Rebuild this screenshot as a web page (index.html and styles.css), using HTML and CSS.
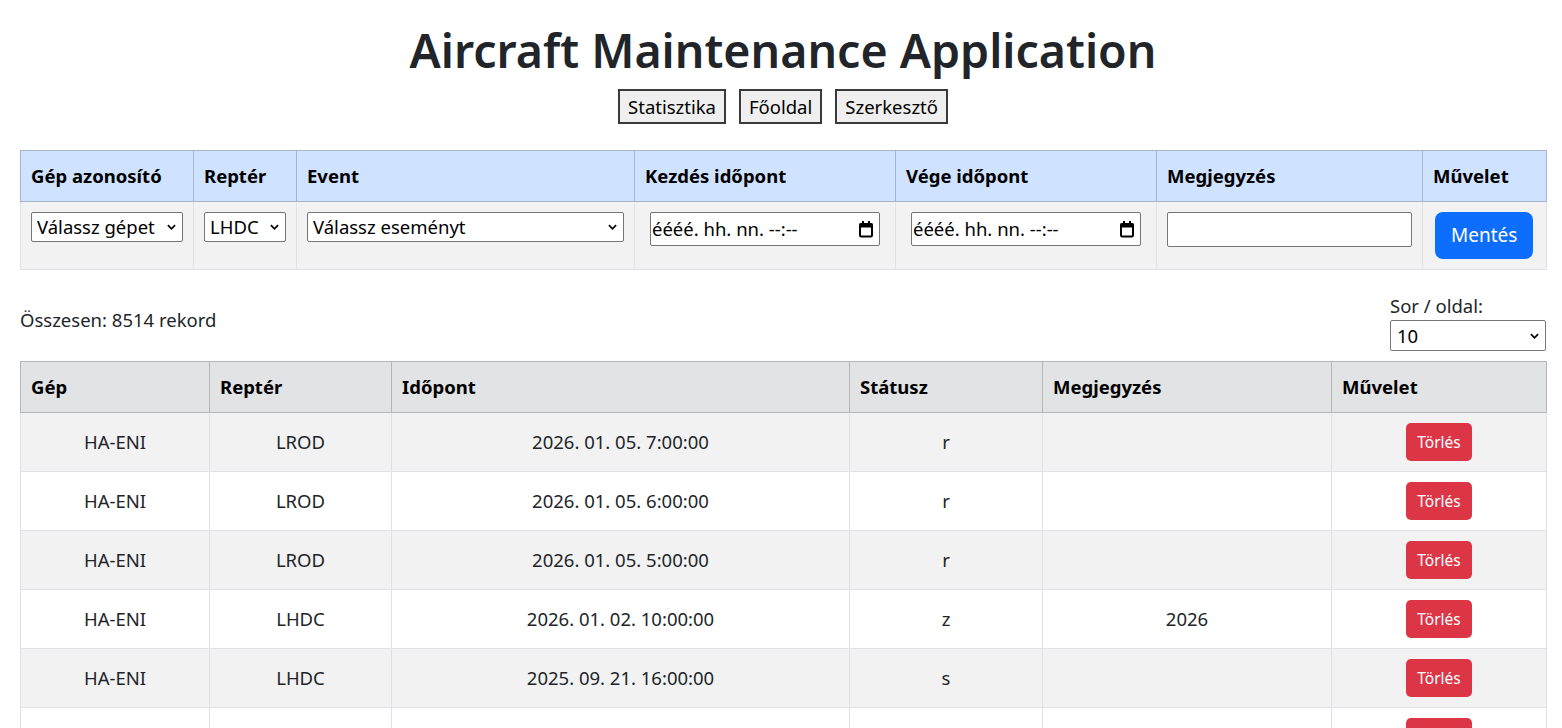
FILE: index.html
```html
<!DOCTYPE html>
<html lang="hu">
<head>
<meta charset="utf-8">
<title>Aircraft Maintenance Application</title>
<link rel="stylesheet" href="styles.css">
</head>
<body>
<div class="page">
  <h1 class="title">Aircraft Maintenance Application</h1>
  <nav class="nav">
    <button class="nav-btn">Statisztika</button>
    <button class="nav-btn">Főoldal</button>
    <button class="nav-btn">Szerkesztő</button>
  </nav>

  <table class="grid form-table">
    <colgroup>
      <col class="c173"><col class="c103"><col class="c338"><col class="c261"><col class="c261"><col class="c266"><col class="c124">
    </colgroup>
    <thead>
      <tr>
        <th>Gép azonosító</th>
        <th>Reptér</th>
        <th>Event</th>
        <th>Kezdés időpont</th>
        <th>Vége időpont</th>
        <th>Megjegyzés</th>
        <th>Művelet</th>
      </tr>
    </thead>
    <tbody>
      <tr>
        <td>
          <span class="select w-plane">
            <select><option>Válassz gépet</option></select>
            <svg class="chev" viewBox="0 0 10 6"><path d="M1 1l4 4 4-4" fill="none" stroke="#000" stroke-width="1.9"/></svg>
          </span>
        </td>
        <td>
          <span class="select w-airport">
            <select><option>LHDC</option></select>
            <svg class="chev" viewBox="0 0 10 6"><path d="M1 1l4 4 4-4" fill="none" stroke="#000" stroke-width="1.9"/></svg>
          </span>
        </td>
        <td>
          <span class="select w-event">
            <select><option>Válassz eseményt</option></select>
            <svg class="chev" viewBox="0 0 10 6"><path d="M1 1l4 4 4-4" fill="none" stroke="#000" stroke-width="1.9"/></svg>
          </span>
        </td>
        <td>
          <div class="dt">
            <span>éééé. hh. nn. --:--</span>
            <svg class="cal" viewBox="0 0 16 18"><rect x="2" y="4" width="12" height="12.5" rx="1.2" fill="none" stroke="#000" stroke-width="2"/><rect x="1.5" y="3.5" width="13" height="4" fill="#000"/><rect x="4" y="1" width="2" height="3" fill="#000"/><rect x="10" y="1" width="2" height="3" fill="#000"/></svg>
          </div>
        </td>
        <td>
          <div class="dt">
            <span>éééé. hh. nn. --:--</span>
            <svg class="cal" viewBox="0 0 16 18"><rect x="2" y="4" width="12" height="12.5" rx="1.2" fill="none" stroke="#000" stroke-width="2"/><rect x="1.5" y="3.5" width="13" height="4" fill="#000"/><rect x="4" y="1" width="2" height="3" fill="#000"/><rect x="10" y="1" width="2" height="3" fill="#000"/></svg>
          </div>
        </td>
        <td><input class="text-input" type="text"></td>
        <td><button class="btn-save">Mentés</button></td>
      </tr>
    </tbody>
  </table>

  <div class="count-row">
    <div class="count">Összesen: 8514 rekord</div>
    <div class="per-page">
      <label class="per-label">Sor / oldal:</label>
      <span class="select w-page">
        <select><option>10</option></select>
        <svg class="chev" viewBox="0 0 10 6"><path d="M1 1l4 4 4-4" fill="none" stroke="#000" stroke-width="1.9"/></svg>
      </span>
    </div>
  </div>

  <table class="grid data-table">
    <colgroup>
      <col class="c189"><col class="c182"><col class="c458"><col class="c193"><col class="c289"><col class="c215">
    </colgroup>
    <thead>
      <tr>
        <th>Gép</th>
        <th>Reptér</th>
        <th>Időpont</th>
        <th>Státusz</th>
        <th>Megjegyzés</th>
        <th>Művelet</th>
      </tr>
    </thead>
    <tbody>
      <tr><td>HA-ENI</td><td>LROD</td><td>2026. 01. 05. 7:00:00</td><td>r</td><td></td><td><button class="btn-del">Törlés</button></td></tr>
      <tr><td>HA-ENI</td><td>LROD</td><td>2026. 01. 05. 6:00:00</td><td>r</td><td></td><td><button class="btn-del">Törlés</button></td></tr>
      <tr><td>HA-ENI</td><td>LROD</td><td>2026. 01. 05. 5:00:00</td><td>r</td><td></td><td><button class="btn-del">Törlés</button></td></tr>
      <tr><td>HA-ENI</td><td>LHDC</td><td>2026. 01. 02. 10:00:00</td><td>z</td><td>2026</td><td><button class="btn-del">Törlés</button></td></tr>
      <tr><td>HA-ENI</td><td>LHDC</td><td>2025. 09. 21. 16:00:00</td><td>s</td><td></td><td><button class="btn-del">Törlés</button></td></tr>
      <tr><td>HA-ENI</td><td>LHDC</td><td>2025. 09. 21. 8:00:00</td><td>r</td><td></td><td><button class="btn-del">Törlés</button></td></tr>
      <tr><td>HA-ENI</td><td>LHDC</td><td>2025. 09. 20. 16:00:00</td><td>s</td><td></td><td><button class="btn-del">Törlés</button></td></tr>
      <tr><td>HA-ENI</td><td>LHDC</td><td>2025. 09. 20. 8:00:00</td><td>r</td><td></td><td><button class="btn-del">Törlés</button></td></tr>
      <tr><td>HA-ENI</td><td>LROD</td><td>2025. 09. 19. 16:00:00</td><td>s</td><td></td><td><button class="btn-del">Törlés</button></td></tr>
      <tr><td>HA-ENI</td><td>LROD</td><td>2025. 09. 19. 8:00:00</td><td>r</td><td></td><td><button class="btn-del">Törlés</button></td></tr>
    </tbody>
  </table>
</div>
</body>
</html>
```
FILE: styles.css
```css
* { box-sizing: border-box; }

html, body { margin: 0; }

body {
  font-family: "Noto Sans", "Open Sans", sans-serif;
  font-size: 18.5px;
  line-height: 1.5;
  color: #212529;
  background: #fff;
}

.page {
  padding: 0 16px 40px 20px;
}

.title {
  font-size: 46.5px;
  font-weight: 600;
  line-height: 56px;
  text-align: center;
  margin: 22px 0 0;
  color: #212529;
}

.nav {
  display: flex;
  justify-content: center;
  gap: 13px;
  margin-top: 11px;
}

.nav-btn {
  font-family: inherit;
  font-size: 18.5px;
  line-height: 25px;
  padding: 3px 8px;
  border: 2px solid #3a3a3a;
  border-radius: 0;
  background: #efefef;
  color: #000;
}

/* tables */
.grid {
  width: 100%;
  border-collapse: collapse;
  table-layout: fixed;
}

.grid th,
.grid td {
  padding: 10px;
  border: 1px solid #dee2e6;
}

.grid th {
  text-align: left;
  font-weight: 700;
  color: #000;
  line-height: 28px;
  padding: 11px 10px;
  vertical-align: middle;
}

.c173 { width: 173px; }
.c103 { width: 103px; }
.c338 { width: 338px; }
.c261 { width: 261px; }
.c266 { width: 266px; }
.c124 { width: 124px; }
.c189 { width: 189px; }
.c182 { width: 182px; }
.c458 { width: 458px; }
.c193 { width: 193px; }
.c289 { width: 289px; }
.c215 { width: 215px; }

.form-table { margin-top: 26px; }

.form-table thead th {
  background: #cfe2ff;
  border-color: #a6b5cc;
}

.form-table tbody td {
  background: #f2f2f2;
  vertical-align: top;
}

/* selects */
.select {
  position: relative;
  display: inline-block;
  vertical-align: top;
}

.select select {
  appearance: none;
  -webkit-appearance: none;
  display: block;
  width: 100%;
  height: 30px;
  font-family: inherit;
  font-size: 18.5px;
  line-height: 26px;
  padding: 0 22px 0 5px;
  border: 1px solid #767676;
  border-radius: 2px;
  background: #fff;
  color: #000;
}

.select .chev {
  position: absolute;
  right: 7px;
  top: 50%;
  width: 9px;
  height: 6px;
  margin-top: -3px;
  pointer-events: none;
}

.w-plane { width: 152px; }
.w-airport { width: 82px; }
.w-event { width: 317px; }
.w-page { width: 156px; }
.w-page select { height: 31px; padding-left: 6px; }

/* date input */
.dt {
  display: flex;
  align-items: center;
  justify-content: space-between;
  width: 230px;
  height: 34px;
  margin-left: 5px;
  padding: 0 5px 0 1px;
  border: 1px solid #767676;
  border-radius: 2px;
  background: #fff;
  color: #000;
  white-space: nowrap;
}

.cal {
  width: 16px;
  height: 18px;
  flex: none;
}

.text-input {
  display: block;
  width: 245px;
  height: 35px;
  font-family: inherit;
  font-size: 18.5px;
  border: 1px solid #767676;
  border-radius: 2px;
  background: #fff;
  padding: 0 4px;
}

.btn-save {
  display: block;
  margin-left: 2px;
  font-family: inherit;
  font-size: 19px;
  line-height: 27px;
  padding: 10px 16px;
  border: 0;
  border-radius: 8px;
  background: #0d6efd;
  color: #fff;
}

/* count row */
.count-row {
  display: flex;
  justify-content: space-between;
  align-items: center;
  margin-top: 22px;
  margin-bottom: 10px;
}

.count {
  margin-bottom: 3px;
}

.per-page {
  display: flex;
  flex-direction: column;
  align-items: flex-start;
}

.per-label {
  display: block;
  line-height: 28px;
}

/* data table */
.data-table thead th {
  background: #e2e3e5;
  border-color: #b5b6b7;
}

.data-table tbody td {
  text-align: center;
  vertical-align: middle;
  color: #212529;
}

.data-table tbody tr:nth-child(odd) td {
  background: #f2f2f2;
}

.btn-del {
  display: inline-block;
  vertical-align: middle;
  font-family: inherit;
  font-size: 15.5px;
  line-height: 24px;
  padding: 7px 11px;
  border: 0;
  border-radius: 5px;
  background: #dc3545;
  color: #fff;
}
```
